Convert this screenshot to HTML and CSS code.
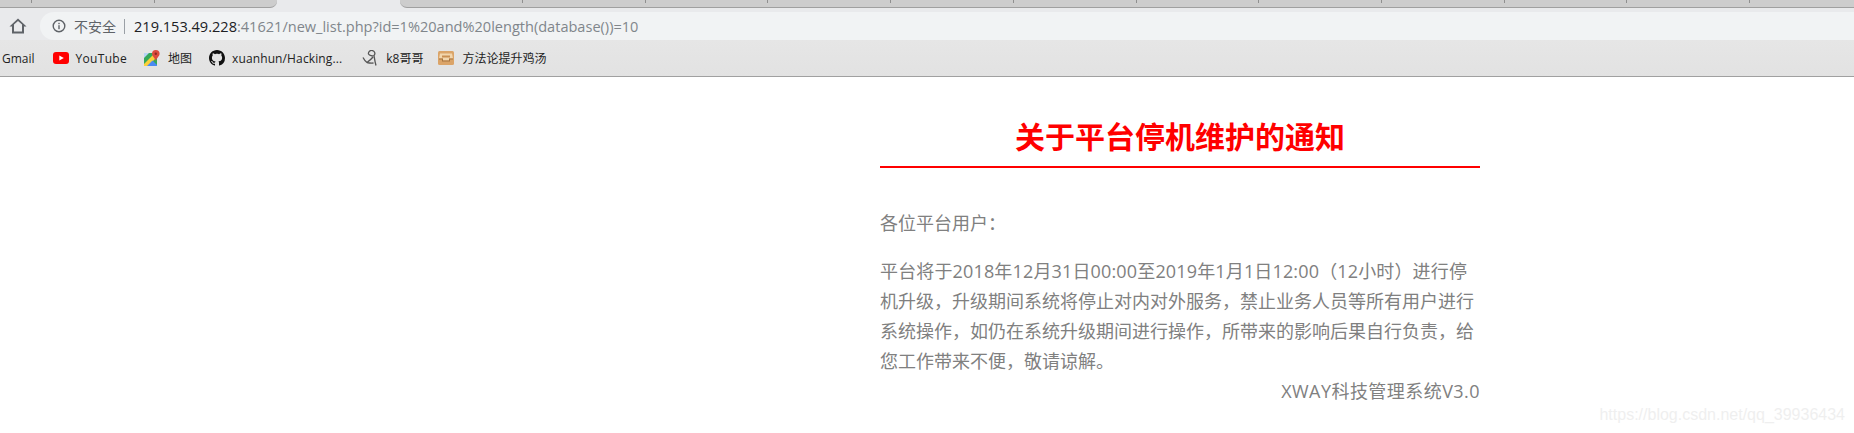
FILE: index.html
```html
<!DOCTYPE html>
<html lang="zh-CN">
<head>
    <meta charset="UTF-8">
    <title>关于平台停机维护的通知</title>
    <link rel="stylesheet" href="styles.css">
</head>
<body>
    <div class="tabstrip">
        <div class="tab tab-first"></div>
        <div class="tab"></div>
        <div class="tab tab-before"></div>
        <div class="tab-active"></div>
        <div class="tab tab-after"></div>
        <div class="tab"></div>
        <div class="tab"></div>
        <div class="tab"></div>
        <div class="tab"></div>
        <div class="tab"></div>
        <div class="tab"></div>
        <div class="tab"></div>
        <div class="tab"></div>
        <div class="tab"></div>
        <div class="tab"></div>
        <div class="tab tab-last"></div>
    </div>

    <div class="toolbar">
        <svg class="icon-home" width="20" height="20" viewBox="0 0 20 20">
            <path d="M10 2.5 L1.5 10.5 H4 V17.5 H16 V10.5 H18.5 Z M6 15.6 V8.6 L10 5 L14 8.6 V15.6 Z" fill="#5f6368" fill-rule="evenodd"/>
        </svg>
        <div class="omnibox">
            <svg class="icon-info" width="14" height="14" viewBox="0 0 14 14">
                <circle cx="7" cy="7" r="5.8" fill="none" stroke="#5f6368" stroke-width="1.4"/>
                <rect x="6.3" y="6.2" width="1.4" height="4" fill="#5f6368"/>
                <rect x="6.3" y="3.8" width="1.4" height="1.4" fill="#5f6368"/>
            </svg>
            <span class="secure">不安全</span>
            <span class="sep"></span>
            <span class="url"><span class="host">219.153.49.228</span>:41621/new_list.php?id=1%20and%20length(database())=10</span>
        </div>
    </div>

    <div class="bookmarks">
        <a class="bm bm-gmail" href="#">Gmail</a>
        <a class="bm bm-yt" href="#">
            <svg width="16" height="12" viewBox="0 0 16 12">
                <rect width="16" height="12" rx="3" fill="#f00"/>
                <path d="M6.3 3.4 L10.8 6 L6.3 8.6 Z" fill="#fff"/>
            </svg>
            YouTube
        </a>
        <a class="bm bm-map" href="#">
            <svg width="16" height="16" viewBox="0 0 16 16">
                <rect x="0" y="3" width="13" height="13" fill="#35a85a"/>
                <path d="M0 3 H5 L0 8 Z" fill="#b9d3f7"/>
                <path d="M0 14 L11 3 H13 V7 L4 16 H0 Z" fill="#fbd03a"/>
                <path d="M3 16 L8.5 10.5 L13 15 V16 Z" fill="#4a8af4"/>
                <path d="M11.8 0 A3.8 3.8 0 0 1 15.6 3.8 C15.6 6.2 12.8 7.8 11.8 11 C10.8 7.8 8 6.2 8 3.8 A3.8 3.8 0 0 1 11.8 0 Z" fill="#dd4b3e"/>
                <circle cx="11.8" cy="3.8" r="1.2" fill="#8e2a20"/>
            </svg>
            地图
        </a>
        <a class="bm bm-git" href="#">
            <svg width="16" height="16" viewBox="0 0 16 16">
                <path d="M8 0C3.58 0 0 3.58 0 8c0 3.54 2.29 6.53 5.47 7.59.4.07.55-.17.55-.38 0-.19-.01-.82-.01-1.49-2.01.37-2.53-.49-2.69-.94-.09-.23-.48-.94-.82-1.13-.28-.15-.68-.52-.01-.53.63-.01 1.08.58 1.23.82.72 1.21 1.87.87 2.33.66.07-.52.28-.87.51-1.07-1.78-.2-3.64-.89-3.64-3.95 0-.87.31-1.59.82-2.15-.08-.2-.36-1.02.08-2.12 0 0 .67-.21 2.2.82.64-.18 1.32-.27 2-.27s1.36.09 2 .27c1.53-1.04 2.2-.82 2.2-.82.44 1.1.16 1.92.08 2.12.51.56.82 1.27.82 2.15 0 3.07-1.87 3.75-3.65 3.95.29.25.54.73.54 1.48 0 1.07-.01 1.93-.01 2.2 0 .21.15.46.55.38A8.01 8.01 0 0 0 16 8c0-4.42-3.58-8-8-8z" fill="#111"/>
            </svg>
            xuanhun/Hacking...
        </a>
        <a class="bm bm-k8" href="#">
            <svg width="16" height="16" viewBox="0 0 16 16">
                <path d="M12 5.5 A3.2 3 0 1 0 6.5 4 C7.5 5.8 10.5 6.2 12 5.5 C12.5 8.5 13 12 14 15.5 M1 7.5 C2 9.5 3 11 5 12.5 C7 11 9 9.5 11 7 M5 12.5 C7 13 9 13.2 11.5 13" fill="none" stroke="#555" stroke-width="1.3"/>
            </svg>
            k8哥哥
        </a>
        <a class="bm" href="#">
            <svg width="16" height="14" viewBox="0 0 16 14">
                <rect width="16" height="14" rx="1.5" fill="#dba468"/>
                <path d="M2 2.5 H14 L15 7.5 H11 V9.5 H5 V7.5 H1 Z" fill="#f2d6ad"/>
                <path d="M4 4.5 H12 V6.5 H4 Z" fill="#c98f52"/>
                <path d="M1 7.5 H5 V9.5 H11 V7.5 H15 V8.5 H12 V10.5 H4 V8.5 H1 Z" fill="#a8743e"/>
            </svg>
            方法论提升鸡汤
        </a>
    </div>

    <div class="page">
        <div class="notice">
            <h1 class="notice-title">关于平台停机维护的通知</h1>
            <p class="notice-greet">各位平台用户：</p>
            <p class="notice-text"><span class="notice-dates">平台将于2018年12月31日00:00至2019年1月1日12:00（12小时）进行停</span>机升级，升级期间系统将停止对内对外服务，禁止业务人员等所有用户进行系统操作，如仍在系统升级期间进行操作，所带来的影响后果自行负责，给您工作带来不便，敬请谅解。</p>
            <p class="notice-sign">XWAY科技管理系统V3.0</p>
        </div>
    </div>

    <div class="watermark">https://blog.csdn.net/qq_39936434</div>
</body>
</html>
```

FILE: styles.css
```css
html, body {
    height: 433px;
    overflow: hidden;
}

body {
    margin: 0;
    padding: 0;
    background-color: #fff;
    font-family: "Open Sans", "Noto Sans CJK SC", sans-serif;
}

.tabstrip {
    display: flex;
    height: 8px;
    background-color: #e9eaec;
}

.tab {
    flex: 0 0 122.7px;
    box-sizing: border-box;
    background-color: #cdcdcd;
    border-bottom: 1px solid #a0a0a0;
    position: relative;
}

.tab::after {
    content: "";
    position: absolute;
    right: 0;
    top: 0;
    width: 1px;
    height: 3px;
    background-color: #8f8f8f;
}

.tab-first {
    flex-basis: 32px;
}

.tab-before {
    border-bottom-right-radius: 7px;
}

.tab-before::after,
.tab-last::after {
    display: none;
}

.tab-after {
    border-bottom-left-radius: 7px;
}

.tab-active {
    flex: 0 0 123px;
}

.tab-last {
    flex: 1;
}

.toolbar {
    display: flex;
    height: 32px;
    background-color: #e9eaec;
}

.icon-home {
    margin: 8px 0 0 8px;
}

.omnibox {
    flex: 1;
    display: flex;
    align-items: center;
    height: 28px;
    margin: 4px 0 0 12px;
    padding-left: 12px;
    background-color: #f1f3f4;
    border-radius: 14px 0 0 14px;
    font-size: 14.55px;
    color: #80868b;
}

.secure {
    margin-left: 8px;
    color: #5f6368;
    font-size: 14px;
}

.sep {
    width: 1px;
    height: 15px;
    margin: 0 9px 0 8px;
    background-color: #9aa0a6;
}

.host {
    color: #202124;
}

.bookmarks {
    display: flex;
    align-items: center;
    height: 36px;
    padding-left: 2px;
    background: linear-gradient(to bottom, #e6e6e6, #e2e2e2);
    border-bottom: 1px solid #a0a0a0;
    font-size: 12px;
}

.bm {
    display: flex;
    align-items: center;
    gap: 8px;
    margin-right: 18px;
    color: #222;
    text-decoration: none;
    white-space: nowrap;
}

.bm-yt {
    gap: 7px;
    margin-right: 17px;
    letter-spacing: 0.3px;
}

.bm-map {
    margin-right: 17px;
}

.bm-git {
    gap: 7px;
    margin-right: 20px;
    letter-spacing: 0.12px;
}

.bm-k8 {
    margin-right: 15px;
}

.page {
    padding-left: 880px;
}

.notice {
    width: 600px;
    color: #808080;
    font-size: 18px;
    line-height: 30px;
}

.notice-title {
    margin: 0;
    padding: 37px 0 6px;
    border-bottom: 2px solid #f00;
    color: #f00;
    font-size: 30px;
    line-height: 46px;
    text-align: center;
}

.notice-greet {
    margin: 40px 0 18px;
}

.notice-text {
    margin: 0;
}

.notice-dates {
    letter-spacing: 0.15px;
}

.notice-sign {
    margin: 0;
    text-align: right;
    letter-spacing: 0.45px;
}

.watermark {
    position: absolute;
    right: 9px;
    bottom: 9px;
    color: #efefef;
    font-family: "Liberation Sans", sans-serif;
    font-size: 16px;
}
```
